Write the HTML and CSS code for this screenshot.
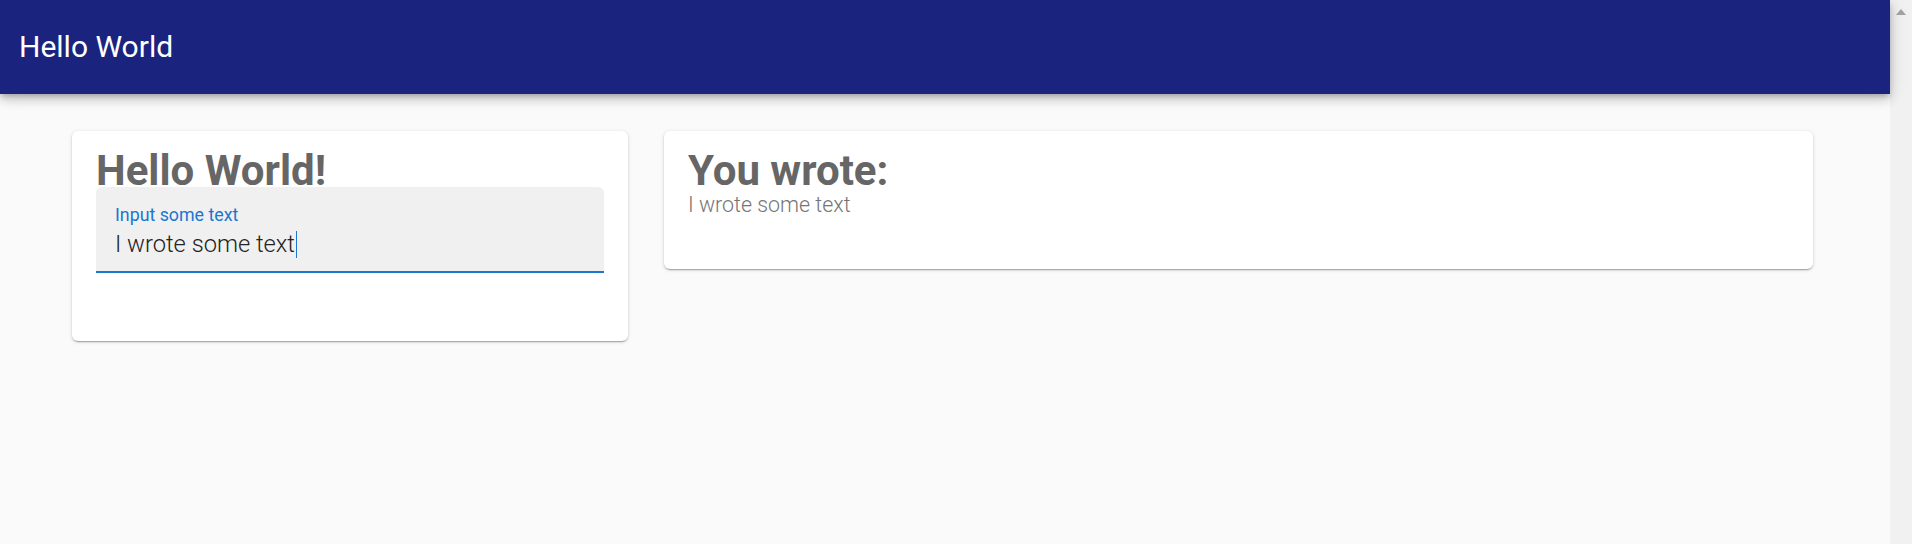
FILE: index.html
```html
<!DOCTYPE html>
<html lang="en">
<head>
<meta charset="utf-8">
<title>Hello World</title>
<link rel="stylesheet" href="styles.css">
</head>
<body>
<div class="viewport">
  <div class="page">
    <header class="appbar">
      <div class="appbar-title">Hello World</div>
    </header>
    <main class="content">
      <section class="card card-input">
        <h1 class="card-title">Hello World!</h1>
        <div class="field">
          <label class="field-label">Input some text</label>
          <div class="field-value">I wrote some text<span class="caret"></span></div>
        </div>
      </section>
      <section class="card card-output">
        <h1 class="card-title">You wrote:</h1>
        <p class="output-text">I wrote some text</p>
      </section>
    </main>
  </div>
  <div class="scrollbar">
    <div class="scroll-arrow"></div>
  </div>
</div>
</body>
</html>
```
FILE: styles.css
```css
html, body {
  margin: 0;
  padding: 0;
  height: 100%;
}
body {
  font-family: Roboto, "Noto Sans", "Liberation Sans", sans-serif;
  background: #fafafa;
  overflow: hidden;
}
.viewport {
  display: flex;
  height: 544px;
}
.page {
  flex: 1;
  min-width: 0;
  background: #fafafa;
}
.appbar {
  height: 94px;
  background: #1a237e;
  display: flex;
  align-items: center;
  padding-left: 19px;
  box-sizing: border-box;
  box-shadow: 0 3px 5px -1px rgba(0,0,0,0.2), 0 6px 10px 0 rgba(0,0,0,0.14), 0 1px 18px 0 rgba(0,0,0,0.12);
  position: relative;
  z-index: 1;
}
.appbar-title {
  color: #ffffff;
  font-size: 30px;
  font-weight: 400;
  line-height: 34px;
}
.content {
  display: grid;
  grid-template-columns: 556px 1149px;
  column-gap: 36px;
  align-items: start;
  padding: 37px 0 0 72px;
}
.card {
  background: #ffffff;
  border-radius: 6px;
  box-shadow: 0 2px 1px -1px rgba(0,0,0,0.2), 0 1px 2px 0 rgba(0,0,0,0.14), 0 1px 4px 0 rgba(0,0,0,0.12);
  padding: 23px 24px 0 24px;
}
.card-input {
  padding-bottom: 68px;
}
.card-output {
  padding-bottom: 49px;
}
.card-title {
  margin: 0;
  font-size: 42px;
  font-weight: 700;
  line-height: 33px;
  color: #666666;
}
.field {
  background: #f0f0f0;
  border-radius: 6px 6px 0 0;
  border-bottom: 2px solid #1976d2;
  padding: 18px 19px 13px 19px;
}
.field-label {
  display: block;
  font-size: 17.8px;
  line-height: 20px;
  color: #1976d2;
}
.field-value {
  margin-top: 5px;
  font-size: 23.7px;
  font-weight: 300;
  line-height: 28px;
  color: #232323;
  display: flex;
  align-items: center;
}
.caret {
  display: inline-block;
  width: 1.5px;
  height: 27px;
  background: #1976d2;
  margin-left: 1px;
}
.output-text {
  margin: 0;
  padding-top: 2px;
  font-size: 21.4px;
  font-weight: 300;
  line-height: 31px;
  color: #757575;
}
.scrollbar {
  width: 22px;
  flex: none;
  background: #f1f1f1;
  display: flex;
  justify-content: center;
  padding-top: 9px;
  box-sizing: border-box;
}
.scroll-arrow {
  width: 0;
  height: 0;
  border-left: 5.5px solid transparent;
  border-right: 5.5px solid transparent;
  border-bottom: 6px solid #a3a3a3;
}
```
